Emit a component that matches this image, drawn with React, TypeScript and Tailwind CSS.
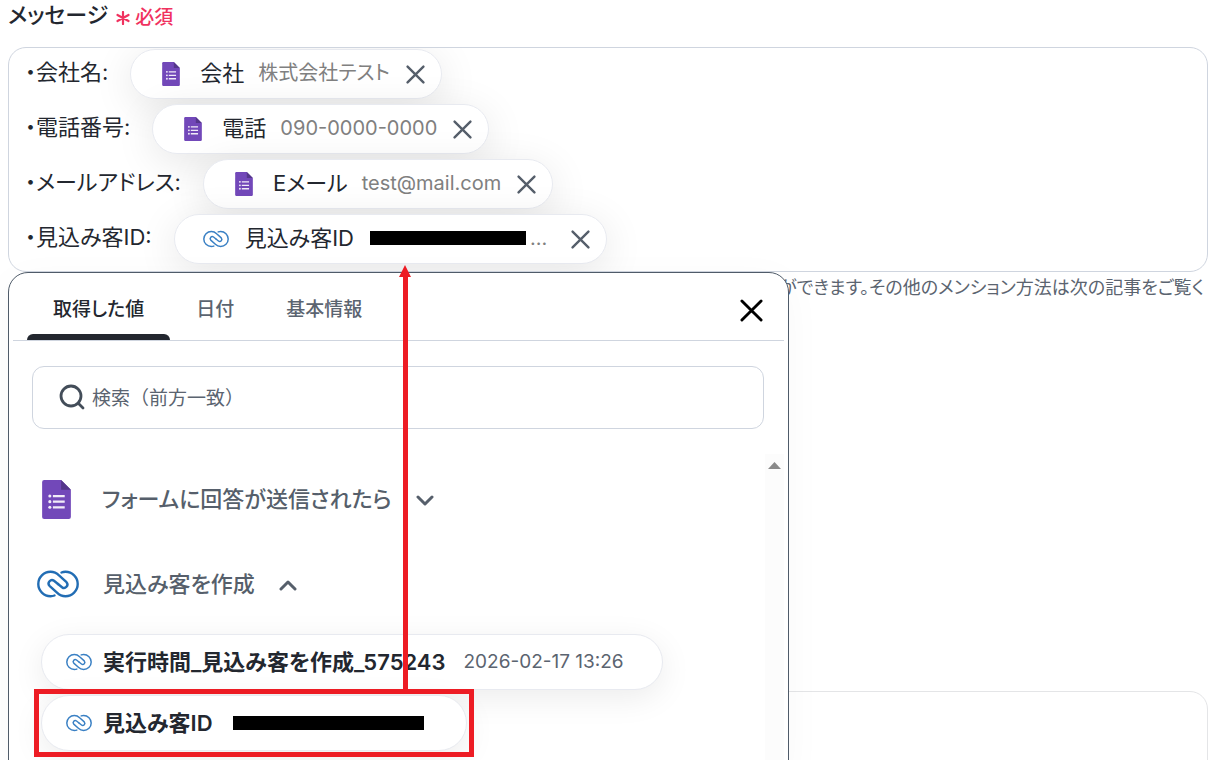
import React, { useState } from 'react';

interface ChipData {
  label: string;
  value?: string;
  icon: 'form' | 'link';
  redacted?: boolean;
}

interface MessageLine {
  text: string;
  chip: ChipData;
}

const lines: MessageLine[] = [
  { text: '・会社名:', chip: { label: '会社', value: '株式会社テスト', icon: 'form' } },
  { text: '・電話番号:', chip: { label: '電話', value: '090-0000-0000', icon: 'form' } },
  { text: '・メールアドレス:', chip: { label: 'Eメール', value: 'test@mail.com', icon: 'form' } },
  { text: '・見込み客ID:', chip: { label: '見込み客ID', icon: 'link', redacted: true } },
];

const tabs = ['取得した値', '日付', '基本情報'];

function FormIcon({ className }: { className: string }) {
  return (
    <svg viewBox="0 0 28 38" className={className} aria-hidden="true">
      <path d="M2 0H18.500L28 9.500V36a2 2 0 0 1-2 2H2a2 2 0 0 1-2-2V2a2 2 0 0 1 2-2Z" fill="#7248b9" />
      <path d="M18.500 0L28 9.500H18.500Z" fill="#54368a" />
      <path d="M10.500 14.500H22V16.700H10.500ZM10.500 20H22V22.200H10.500ZM10.500 25.500H22V27.700H10.500Z" fill="#f1ecf8" />
      <g fill="#f1ecf8">
        <circle cx="7.500" cy="15.600" r="1.500" />
        <circle cx="7.500" cy="21.100" r="1.500" />
        <circle cx="7.500" cy="26.600" r="1.500" />
      </g>
    </svg>
  );
}

function LinkIcon({ className }: { className: string }) {
  return (
    <svg
      viewBox="0 0 42 28"
      className={className}
      fill="none"
      stroke="currentColor"
      strokeWidth="2.400"
      strokeLinecap="round"
      strokeLinejoin="round"
      aria-hidden="true"
    >
      <path d="M17.500 25.500C16.300 26 15 26.200 13.500 26.200A12.200 12.200 0 0 1 13.500 1.800C17 1.800 19.800 3.200 22 5.400L29.500 12.200C32.200 15.200 28.200 19.800 25 17.200L21 14" />
      <path d="M24.500 2.500C25.700 2 27 1.800 28.500 1.800A12.200 12.200 0 0 1 28.500 26.200C25 26.200 22.200 24.800 20 22.600L12.500 15.800C9.800 12.800 13.800 8.200 17 10.800L21 14" />
    </svg>
  );
}

function CloseIcon({ className, strokeWidth }: { className: string; strokeWidth: number }) {
  return (
    <svg viewBox="0 0 24 24" className={className} fill="none" stroke="currentColor" strokeWidth={strokeWidth} strokeLinecap="round" aria-hidden="true">
      <path d="M2 2L22 22M22 2L2 22" />
    </svg>
  );
}

function MentionChip({ chip }: { chip: ChipData }) {
  return (
    <span className="flex h-[50px] items-center rounded-full border border-[#e8eaf0] bg-white pl-7 pr-4 shadow-[0_8px_40px_rgba(0,0,0,0.1)]">
      {chip.icon === 'form' ? (
        <FormIcon className="ml-[3px] h-6 w-[18px]" />
      ) : (
        <LinkIcon className="h-[18px] w-[26px] text-[#3a80c4]" />
      )}
      <span className={chip.icon === 'form' ? 'ml-5 pb-[2px] text-[22px]' : 'ml-4 pb-[2px] text-[22px]'}>{chip.label}</span>
      {chip.redacted ? (
        <span className="ml-4 flex items-center pb-[2px] text-[20px] text-[#808080]">
          <span className="mr-1 h-[14px] w-[156px] bg-black" />
          ...
        </span>
      ) : (
        <span className="ml-[14px] pb-[2px] text-[20px] text-[#808080]">{chip.value}</span>
      )}
      <button type="button" aria-label={`${chip.label}を削除`} className={chip.redacted ? 'ml-6 text-[#565f6b]' : 'ml-4 text-[#565f6b]'}>
        <CloseIcon className="h-[19px] w-[19px]" strokeWidth={3} />
      </button>
    </span>
  );
}

export default function App() {
  const [activeTab, setActiveTab] = useState(0);
  const [query, setQuery] = useState('');

  return (
    <div className="relative h-screen overflow-hidden bg-white px-2 font-[Inter,'Noto_Sans_CJK_JP',sans-serif] text-[#23272f] [font-feature-settings:'palt']">
      <div className="flex h-[47px] items-start gap-2 pt-px">
        <span className="text-[22px] leading-7 font-medium">メッセージ</span>
        <span className="flex items-center gap-[5px] text-[19px] leading-[34px] font-medium text-[#f0325f]">
          <svg viewBox="0 0 14 14" className="h-[14px] w-[14px]" stroke="currentColor" strokeWidth="2.200" strokeLinecap="round" aria-hidden="true">
            <path d="M7 1V13M1.500 4L12.500 10M12.500 4L1.500 10" />
          </svg>
          必須
        </span>
      </div>

      {/* Message editor */}
      <div className="flex h-[225px] flex-col gap-[5px] overflow-hidden rounded-[18px] border border-[#cfd5df] pt-px pl-4">
        {lines.map((line) => (
          <div key={line.text} className="flex shrink-0 items-center gap-[22px]">
            <span className="pb-1 text-[22px] leading-8">{line.text}</span>
            <MentionChip chip={line.chip} />
          </div>
        ))}
      </div>
      <p className="pt-1 pr-1 text-right text-[18px] leading-6 whitespace-nowrap text-[#5b6470]">
        ができます。その他のメンション方法は次の記事をご覧く
      </p>
      <div className="mt-[391px] h-[200px] rounded-[18px] border border-[#e4e5e7]" />

      {/* Mention picker */}
      <div className="absolute top-[272px] left-2 w-[781px] rounded-t-[20px] border border-[#4f5b69] bg-white px-1 shadow-[0_8px_40px_rgba(0,0,0,0.03)]">
        <div className="flex h-[68px] items-stretch border-b border-[#cfd5df] pl-[14px]">
          <div role="tablist" className="flex">
            {tabs.map((tab, i) => (
              <button
                key={tab}
                type="button"
                role="tab"
                aria-selected={activeTab === i}
                onClick={() => setActiveTab(i)}
                className={
                  activeTab === i
                    ? 'flex flex-col items-center text-[19px] font-medium text-[#23272f]'
                    : 'flex flex-col items-center text-[19px] font-medium text-[#5b6470]'
                }
              >
                <span className="flex-1 px-[26px] pt-[23px] leading-7">{tab}</span>
                {activeTab === i && <span className="h-[6px] w-full rounded-t-[6px] bg-[#23272f]" />}
              </button>
            ))}
          </div>
          <button type="button" aria-label="閉じる" className="mt-2 mr-[21px] ml-auto text-black">
            <CloseIcon className="h-[23px] w-[23px]" strokeWidth={3} />
          </button>
        </div>

        <label className="mt-[25px] mr-5 ml-[19px] flex h-[63px] items-center gap-[7px] rounded-xl border border-[#cfd5df] pl-[26px]">
          <svg viewBox="0 0 26 26" className="mb-[2px] h-[26px] w-[26px] text-[#434d59]" fill="none" stroke="currentColor" strokeWidth="2.800" strokeLinecap="round" aria-hidden="true">
            <circle cx="12" cy="12" r="10" />
            <path d="M19.500 19.500L24 24" />
          </svg>
          <input
            type="text"
            aria-label="検索"
            placeholder="検索（前方一致）"
            value={query}
            onChange={(e) => setQuery(e.target.value)}
            className="min-w-0 flex-1 pt-1 text-[19px] outline-none [font-feature-settings:normal] placeholder:text-[#5b6470]"
          />
        </label>

        <div className="mt-[25px] flex">
          <div className="min-w-0 flex-1 pl-6">
            <button type="button" className="mt-[25px] flex h-10 items-center text-[22px] font-medium text-[#565f6b]">
              <FormIcon className="ml-[5px] h-[39px] w-[29px]" />
              <span className="ml-[31px]">フォームに回答が送信されたら</span>
              <svg viewBox="0 0 18 12" className="mt-1 ml-6 h-3 w-[18px]" fill="none" stroke="currentColor" strokeWidth="3" strokeLinecap="round" strokeLinejoin="round" aria-hidden="true">
                <path d="M2 2L9 9L16 2" />
              </svg>
            </button>
            <button type="button" className="mt-[45px] flex h-10 items-center text-[22px] font-medium text-[#565f6b]">
              <LinkIcon className="h-7 w-[42px] text-[#226db4]" />
              <span className="ml-6">見込み客を作成</span>
              <svg viewBox="0 0 18 12" className="mt-1 ml-6 h-3 w-[18px]" fill="none" stroke="currentColor" strokeWidth="3" strokeLinecap="round" strokeLinejoin="round" aria-hidden="true">
                <path d="M2 9L9 2L16 9" />
              </svg>
            </button>

            <div className="mt-[30px] flex flex-col items-start gap-[5px] pl-1">
              <button type="button" className="flex h-14 items-center rounded-full border border-[#e8eaf0] bg-white pr-[38px] pl-6 shadow-[0_8px_32px_rgba(0,0,0,0.08)]">
                <LinkIcon className="h-[18px] w-[26px] text-[#3a80c4]" />
                <span className="ml-[11px] text-[22px] font-semibold">実行時間_見込み客を作成_575243</span>
                <span className="ml-[18px] text-[19px] text-[#5b6470]">2026-02-17 13:26</span>
              </button>
              <button type="button" className="relative flex h-14 items-center rounded-full border border-[#e8eaf0] bg-white pr-[42px] pl-6 shadow-[0_8px_32px_rgba(0,0,0,0.08)]">
                <LinkIcon className="h-[18px] w-[26px] text-[#3a80c4]" />
                <span className="ml-[11px] text-[22px] font-semibold">見込み客ID</span>
                <span className="ml-5 h-[14px] w-[191px] bg-black" />

                {/* Highlight frame and arrow up to the inserted chip */}
                <span className="pointer-events-none absolute -inset-x-2 -inset-y-[7px] border-[5px] border-[#ed1c24]">
                  <svg viewBox="0 0 12 429" className="absolute bottom-full left-[360px] h-[429px] w-3 max-w-none" fill="#ed1c24" aria-hidden="true">
                    <path d="M6 0L12 12H9V429H4V12H0Z" />
                  </svg>
                </span>
              </button>
            </div>
          </div>
          <div className="flex h-[320px] w-[19px] justify-center bg-[#fcfcfc] pt-2">
            <svg viewBox="0 0 13 7" className="h-[7px] w-[13px]" fill="#8a8a8a" aria-hidden="true">
              <path d="M6.500 0L13 7H0Z" />
            </svg>
          </div>
        </div>
      </div>
    </div>
  );
}
